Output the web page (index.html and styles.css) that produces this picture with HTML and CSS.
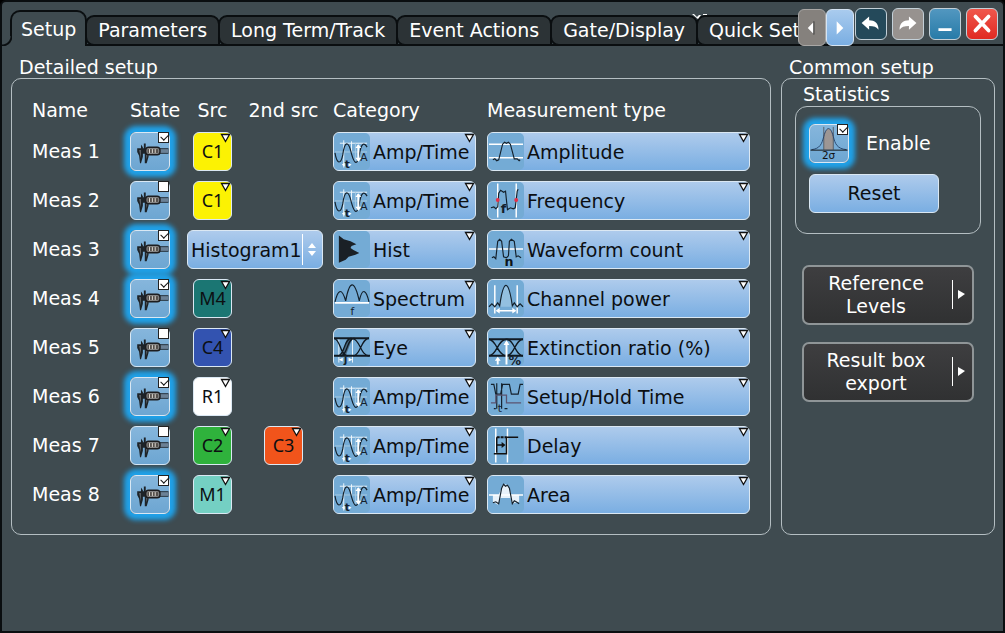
FILE: index.html
```html
<!DOCTYPE html>
<html lang="en">
<head>
<meta charset="utf-8">
<title>Measurement setup</title>
<link rel="stylesheet" href="styles.css">
</head>
<body>
<svg class="sprite" aria-hidden="true">
  <symbol id="caliper" viewBox="0 0 39 39">
    <path d="M6 16h33v6H18v3l-2 7h-2V22h-2v3l-2 7H9L8 24 6 20z" fill="#1d2328"/>
    <path d="M8 18h2v9zM15 22h2l-1 6z" fill="#5a6066"/>
    <path d="M10 17v-5l2 3v2zM13 17v-6h2v6z" fill="#1d2328"/>
    <path d="M29 17h10v4H29z" fill="#6b8196"/>
    <rect x="15" y="15" width="15" height="8" rx="3" fill="#858585" stroke="#1d1d1f" stroke-width="1.500"/>
    <rect x="17" y="17" width="11" height="4" fill="#55504c"/>
    <path d="M19 17v4M22 17v4M25 17v4" stroke="#e8e4dc"/>
  </symbol>
  <symbol id="sigma" viewBox="0 0 39 39">
    <path d="M14 26V10c3-8 7-8 10 0v16z" fill="#9d9694"/>
    <path d="M14 2v24M24 2v24" stroke="#555c66"/>
    <path d="M1 26c9-1 11-6 13-14 3-11 7-11 10 0 2 8 4 13 14 14" fill="none" stroke="#27456c"/>
    <path d="M0 26.500h39" stroke="#111"/>
    <text x="19" y="36" text-anchor="middle" font-size="11" fill="#111">2σ</text>
  </symbol>
  <symbol id="amp" viewBox="0 0 37 37">
    <path d="M10 7v28M18 8v12M6 10h28" stroke="#eef6fb"/>
    <path d="M1 19h33M22 10v18" stroke="#a8cbe3"/>
    <path d="M1 20c2 12 6 12 8 2 2-15 6-15 9-1 3 11 6 12 8 1 2-13 5-13 8-8" fill="none" stroke="#14212c" stroke-width="1.200"/>
    <path d="M25 12v16" stroke="#fff" stroke-width="2"/>
    <path d="M22 15l3-4 3 4zM22 25l3 4 3-4zM8 32l3-2v4zM18 32l-3-2v4z" fill="#fff"/>
    <text x="27" y="28" font-size="11" fill="#14212c">A</text>
    <text x="11" y="35" font-size="11" font-weight="bold" fill="#14212c">t</text>
  </symbol>
  <symbol id="hist" viewBox="0 0 37 37">
    <path d="M5 4l5 4 7 2 6 3-5 2-1 2 3 2 6 3-4 2-7 2-3 3-7 3z" fill="#1a2026"/>
  </symbol>
  <symbol id="spectrum" viewBox="0 0 37 37">
    <path d="M1 22C4 9 8 7 12 21 16-1 21-1 26 21 29 7 33 9 36 22" fill="none" stroke="#14212c" stroke-width="1.200"/>
    <path d="M1 23h35" stroke="#fff" stroke-width="2"/>
    <text x="17" y="35" font-size="11" fill="#14212c">f</text>
  </symbol>
  <symbol id="eye" viewBox="0 0 37 37">
    <path d="M7 27L14 9h5l-7 18z" fill="#4c6980"/>
    <path d="M5 9v25M19 9v25" stroke="#eef6fb"/>
    <path d="M0 9h36M0 27h37" stroke="#111a22" stroke-width="2"/>
    <path d="M0 9c7 1 6 18 14 18M4 27c7 0 6-18 14-18M7 27c7 0 6-18 14-18M19 9c8 1 8 18 17 18M20 27c7 0 8-18 16-18" fill="none" stroke="#111a22" stroke-width="1.300"/>
    <path d="M5 31l4-2v4zM19 31l-4-2v4z" fill="#fff"/>
    <text x="10" y="34" font-size="11" font-weight="bold" fill="#14212c">j</text>
  </symbol>
  <symbol id="amplitude" viewBox="0 0 37 37">
    <path d="M1 11h35M1 25h35" stroke="#fff" stroke-width="1.500"/>
    <path d="M5 27l2-1 2 2 2-1 4-16 2-2 2 1 2-1 2 2 4 15 3 0 2 2 1-1" fill="none" stroke="#14212c" stroke-width="1.200"/>
  </symbol>
  <symbol id="frequency" viewBox="0 0 37 37">
    <path d="M10 1v35M29 1v35" stroke="#fff" stroke-width="1.500"/>
    <path d="M3 26l3-1 2 2 2-2 1-14 2-3 3 2 2-1 2 19 3-2 3 1 2-1 2-17 1-2" fill="none" stroke="#14212c" stroke-width="1.200"/>
    <circle cx="10" cy="18" r="2" fill="#e5304a"/><circle cx="29" cy="18" r="2" fill="#e5304a"/>
    <text x="13" y="31" font-size="13" font-weight="bold" fill="#14212c">f</text>
  </symbol>
  <symbol id="count" viewBox="0 0 37 37">
    <path d="M1 18h35" stroke="#fff" stroke-width="1.500"/>
    <path d="M4 27l2-1 2 2 2-18 2-2 2 2 2 16 3 1 2-2 1-15 2-2 3 2 2 16 2-1 3 2" fill="none" stroke="#14212c" stroke-width="1.200"/>
    <text x="17" y="35" font-size="13" font-weight="bold" fill="#0c141b">n</text>
  </symbol>
  <symbol id="power" viewBox="0 0 37 37">
    <path d="M12 27C16-1 21-1 25 27z" fill="#93c0e0"/>
    <path d="M7 5v29M30 5v29M9 31h19" stroke="#fff" stroke-width="1.500"/>
    <path d="M8 31l4-3v6zM29 31l-4-3v6z" fill="#fff"/>
    <path d="M1 27l3-3 3 3 3-4 2 3C16-2 21-2 25 26l2-3 3 4 3-3 3 3" fill="none" stroke="#14212c" stroke-width="1.200"/>
  </symbol>
  <symbol id="extinction" viewBox="0 0 37 37">
    <path d="M1 10h35M1 27h35" stroke="#111a22" stroke-width="2"/>
    <path d="M1 10c8 1 9 17 18 17 8 0 9-17 17-17M1 27c8 0 9-17 18-17 8 0 9 17 17 17" fill="none" stroke="#111a22" stroke-width="1.400"/>
    <path d="M19 13v23M10 30v6" stroke="#fff" stroke-width="2"/>
    <path d="M16 16l3-5 3 5zM7 32l3-4 3 4z" fill="#fff"/>
    <text x="21" y="36" font-size="13" font-weight="bold" fill="#14212c">%</text>
  </symbol>
  <symbol id="setuphold" viewBox="0 0 37 37">
    <path d="M3 6h3l2 10h5l2-10h7l2 10h7l2-10h3M9 5v26M14 5v26M17 31h3M6 31h2" fill="none" stroke="#14212c" stroke-width="1.200"/>
    <path d="M3 25h5V17h11v8h15" fill="none" stroke="#5b5470" stroke-width="1.300"/>
    <text x="10" y="34" font-size="11" fill="#14212c">t</text>
  </symbol>
  <symbol id="delay" viewBox="0 0 37 37">
    <path d="M8 1v35M20 1v35" stroke="#fff" stroke-width="1.500"/>
    <path d="M9 10h10" stroke="#111" stroke-width="2" stroke-dasharray="3 1"/>
    <path d="M6 27h13V10h12M9 18h6M9 10v16" fill="none" stroke="#111" stroke-width="1.500"/>
    <path d="M14 15l4 3-4 3z" fill="#111"/>
  </symbol>
  <symbol id="area" viewBox="0 0 37 37">
    <path d="M5 19h6l4-10 3-1 3 2 3 9h8v7l-4 1-3 1-2-6-10 0-3 7-5-3z" fill="#e8f2fa"/>
    <path d="M1 19h35" stroke="#fff" stroke-width="1.500"/>
    <path d="M5 27l3-1 3 2 3-16 2-4 2 2 2-1 2 3 3 16 2-3 2 1 3 2" fill="none" stroke="#14212c" stroke-width="1.200"/>
  </symbol>
  <symbol id="drop" viewBox="0 0 11 10"><path d="M1.500 1.500h8L5.500 8.500z" fill="#fff" stroke="#111" stroke-width="1.300"/></symbol>
</svg>

<div class="dialog">
  <header class="bar">
    <div class="tabs" role="tablist">
      <button class="tab tab-active" role="tab" aria-selected="true">Setup</button>
      <button class="tab" role="tab">Parameters</button>
      <button class="tab" role="tab">Long Term/Track</button>
      <button class="tab" role="tab">Event Actions</button>
      <button class="tab" role="tab">Gate/Display</button>
      <button class="tab" role="tab">Quick Setup<svg class="glint" viewBox="0 0 16 5"><path d="M0 0h2l3 3 2-2h2L6 5zM11 0h4v1h-4z" fill="#fff"/></svg></button>
    </div>
    <div class="scrollers">
      <button class="scroller scroller-off" aria-label="Previous tabs"><svg viewBox="0 0 27 37"><path d="M9 19l6-6v12z" fill="#fff"/><path d="M15.500 12v14" stroke="#333"/></svg></button>
      <button class="scroller" aria-label="Next tabs"><svg viewBox="0 0 27 37"><path d="M17 19l-7-7v14z" fill="#fff"/></svg></button>
    </div>
    <div class="controls">
      <button class="control control-undo" aria-label="Undo"><svg viewBox="0 0 32 32"><path d="M6 15l8-7v4c6 0 10 3 10 10-2-3-5-4-10-4v4z" fill="#fff"/></svg></button>
      <button class="control control-redo" aria-label="Redo"><svg viewBox="0 0 32 32"><path d="M25 15l-8-7v4c-6 0-10 3-10 10 2-3 5-4 10-4v4z" fill="#fff"/></svg></button>
      <button class="control control-min" aria-label="Minimize"><svg viewBox="0 0 32 32"><path d="M9 22h14" stroke="#fff" stroke-width="3"/></svg></button>
      <button class="control control-close" aria-label="Close"><svg viewBox="0 0 32 32"><path d="M9 8l14 15M23 8L9 23" stroke="#fff" stroke-width="4" stroke-linecap="round"/></svg></button>
    </div>
  </header>

  <main class="content">
    <section class="group">
      <h2 class="group-title">Detailed setup</h2>
      <div class="panel">
        <table class="meas">
          <colgroup><col class="c-name"><col class="c-state"><col class="c-src"><col class="c-src2"><col class="c-cat"><col></colgroup>
          <thead>
            <tr><th class="name" scope="col">Name</th><th class="state" scope="col">State</th><th class="mid" scope="col">Src</th><th class="mid" scope="col">2nd src</th><th class="cat" scope="col">Category</th><th class="type" scope="col">Measurement type</th></tr>
          </thead>
          <tbody>
            <tr>
              <th class="name" scope="row">Meas 1</th>
              <td><label class="toggle"><svg class="toggle-art"><use href="#caliper"/></svg><input type="checkbox" class="tick" aria-label="Meas 1 state" checked></label></td>
              <td><div class="chip chip-yellow"><select aria-label="Meas 1 source"><option>C1</option></select><svg class="drop"><use href="#drop"/></svg></div></td>
              <td></td>
              <td class="cat"><div class="pick"><svg class="art"><use href="#amp"/></svg><select aria-label="Meas 1 category"><option>Amp/Time</option></select><svg class="drop"><use href="#drop"/></svg></div></td>
              <td class="type"><div class="pick"><svg class="art"><use href="#amplitude"/></svg><select aria-label="Meas 1 type"><option>Amplitude</option></select><svg class="drop"><use href="#drop"/></svg></div></td>
            </tr>
            <tr>
              <th class="name" scope="row">Meas 2</th>
              <td><label class="toggle"><svg class="toggle-art"><use href="#caliper"/></svg><input type="checkbox" class="tick" aria-label="Meas 2 state"></label></td>
              <td><div class="chip chip-yellow"><select aria-label="Meas 2 source"><option>C1</option></select><svg class="drop"><use href="#drop"/></svg></div></td>
              <td></td>
              <td class="cat"><div class="pick"><svg class="art"><use href="#amp"/></svg><select aria-label="Meas 2 category"><option>Amp/Time</option></select><svg class="drop"><use href="#drop"/></svg></div></td>
              <td class="type"><div class="pick"><svg class="art"><use href="#frequency"/></svg><select aria-label="Meas 2 type"><option>Frequency</option></select><svg class="drop"><use href="#drop"/></svg></div></td>
            </tr>
            <tr>
              <th class="name" scope="row">Meas 3</th>
              <td><label class="toggle"><svg class="toggle-art"><use href="#caliper"/></svg><input type="checkbox" class="tick" aria-label="Meas 3 state" checked></label></td>
              <td colspan="2"><div class="pick pick-source"><select aria-label="Meas 3 source"><option>Histogram1</option></select><svg class="spin" viewBox="0 0 20 37"><path d="M.5 3v31" stroke="#fff"/><path d="M6 17l4-5 4 5zM6 20l4 5 4-5z" fill="#fff"/></svg></div></td>
              <td class="cat"><div class="pick"><svg class="art"><use href="#hist"/></svg><select aria-label="Meas 3 category"><option>Hist</option></select><svg class="drop"><use href="#drop"/></svg></div></td>
              <td class="type"><div class="pick"><svg class="art"><use href="#count"/></svg><select aria-label="Meas 3 type"><option>Waveform count</option></select><svg class="drop"><use href="#drop"/></svg></div></td>
            </tr>
            <tr>
              <th class="name" scope="row">Meas 4</th>
              <td><label class="toggle"><svg class="toggle-art"><use href="#caliper"/></svg><input type="checkbox" class="tick" aria-label="Meas 4 state" checked></label></td>
              <td><div class="chip chip-teal"><select aria-label="Meas 4 source"><option>M4</option></select><svg class="drop"><use href="#drop"/></svg></div></td>
              <td></td>
              <td class="cat"><div class="pick"><svg class="art"><use href="#spectrum"/></svg><select aria-label="Meas 4 category"><option>Spectrum</option></select><svg class="drop"><use href="#drop"/></svg></div></td>
              <td class="type"><div class="pick"><svg class="art"><use href="#power"/></svg><select aria-label="Meas 4 type"><option>Channel power</option></select><svg class="drop"><use href="#drop"/></svg></div></td>
            </tr>
            <tr>
              <th class="name" scope="row">Meas 5</th>
              <td><label class="toggle"><svg class="toggle-art"><use href="#caliper"/></svg><input type="checkbox" class="tick" aria-label="Meas 5 state"></label></td>
              <td><div class="chip chip-blue"><select aria-label="Meas 5 source"><option>C4</option></select><svg class="drop"><use href="#drop"/></svg></div></td>
              <td></td>
              <td class="cat"><div class="pick"><svg class="art"><use href="#eye"/></svg><select aria-label="Meas 5 category"><option>Eye</option></select><svg class="drop"><use href="#drop"/></svg></div></td>
              <td class="type"><div class="pick"><svg class="art"><use href="#extinction"/></svg><select aria-label="Meas 5 type"><option>Extinction ratio (%)</option></select><svg class="drop"><use href="#drop"/></svg></div></td>
            </tr>
            <tr>
              <th class="name" scope="row">Meas 6</th>
              <td><label class="toggle"><svg class="toggle-art"><use href="#caliper"/></svg><input type="checkbox" class="tick" aria-label="Meas 6 state" checked></label></td>
              <td><div class="chip chip-white"><select aria-label="Meas 6 source"><option>R1</option></select><svg class="drop"><use href="#drop"/></svg></div></td>
              <td></td>
              <td class="cat"><div class="pick"><svg class="art"><use href="#amp"/></svg><select aria-label="Meas 6 category"><option>Amp/Time</option></select><svg class="drop"><use href="#drop"/></svg></div></td>
              <td class="type"><div class="pick"><svg class="art"><use href="#setuphold"/></svg><select aria-label="Meas 6 type"><option>Setup/Hold Time</option></select><svg class="drop"><use href="#drop"/></svg></div></td>
            </tr>
            <tr>
              <th class="name" scope="row">Meas 7</th>
              <td><label class="toggle"><svg class="toggle-art"><use href="#caliper"/></svg><input type="checkbox" class="tick" aria-label="Meas 7 state"></label></td>
              <td><div class="chip chip-green"><select aria-label="Meas 7 source"><option>C2</option></select><svg class="drop"><use href="#drop"/></svg></div></td>
              <td><div class="chip chip-orange"><select aria-label="Meas 7 second source"><option>C3</option></select><svg class="drop"><use href="#drop"/></svg></div></td>
              <td class="cat"><div class="pick"><svg class="art"><use href="#amp"/></svg><select aria-label="Meas 7 category"><option>Amp/Time</option></select><svg class="drop"><use href="#drop"/></svg></div></td>
              <td class="type"><div class="pick"><svg class="art"><use href="#delay"/></svg><select aria-label="Meas 7 type"><option>Delay</option></select><svg class="drop"><use href="#drop"/></svg></div></td>
            </tr>
            <tr>
              <th class="name" scope="row">Meas 8</th>
              <td><label class="toggle"><svg class="toggle-art"><use href="#caliper"/></svg><input type="checkbox" class="tick" aria-label="Meas 8 state" checked></label></td>
              <td><div class="chip chip-mint"><select aria-label="Meas 8 source"><option>M1</option></select><svg class="drop"><use href="#drop"/></svg></div></td>
              <td></td>
              <td class="cat"><div class="pick"><svg class="art"><use href="#amp"/></svg><select aria-label="Meas 8 category"><option>Amp/Time</option></select><svg class="drop"><use href="#drop"/></svg></div></td>
              <td class="type"><div class="pick"><svg class="art"><use href="#area"/></svg><select aria-label="Meas 8 type"><option>Area</option></select><svg class="drop"><use href="#drop"/></svg></div></td>
            </tr>
          </tbody>
        </table>
      </div>
    </section>

    <section class="group">
      <h2 class="group-title">Common setup</h2>
      <div class="panel panel-common">
        <h3 class="stats-title">Statistics</h3>
        <div class="stats">
          <div class="enable">
            <label class="toggle" for="enable"><svg class="toggle-art"><use href="#sigma"/></svg><input type="checkbox" class="tick" id="enable" checked></label>
            <label for="enable">Enable</label>
          </div>
          <button class="reset">Reset</button>
        </div>
        <div class="menus">
          <button class="menu"><span class="menu-text">Reference Levels</span><svg class="menu-mark" viewBox="0 0 20 30"><path d="M.5 0v29" stroke="#fff"/><path d="M6 10l7 4-7 5z" fill="#fff"/></svg></button>
          <button class="menu"><span class="menu-text">Result box export</span><svg class="menu-mark" viewBox="0 0 20 30"><path d="M.5 0v29" stroke="#fff"/><path d="M6 10l7 4-7 5z" fill="#fff"/></svg></button>
        </div>
      </div>
    </section>
  </main>
</div>
</body>
</html>
```
FILE: styles.css
```css
* { box-sizing: border-box; }
body {
  margin: 0;
  background: #000;
  color: #fff;
  font-family: "DejaVu Sans", Verdana, sans-serif;
  font-size: 19px;
  line-height: 23px;
}
button, select { font: inherit; color: inherit; margin: 0; padding: 0; }
svg { display: block; }
.sprite { display: none; }

.dialog {
  min-height: 100vh;
  border: 2px solid #0a0e10;
  border-radius: 6px 6px 0 0;
  background: #3f4b50;
}

/* tab bar */
.bar {
  display: flex;
  padding-right: 5px;
  background: linear-gradient(#0a0e10, #0a0e10) bottom / 100% 2px no-repeat;
}
.tabs {
  display: flex;
  flex: 1;
  min-width: 0;
  align-items: flex-end;
  height: 44px;
  padding-left: 8px;
  overflow: hidden;
}
.tab {
  flex: none;
  position: relative;
  height: 31px;
  margin-left: -2px;
  padding: 0 11px;
  border: 2px solid #0a0e10;
  border-radius: 9px 9px 0 9px;
  background: #2c3336;
  white-space: nowrap;
}
.tab-active {
  z-index: 1;
  height: 36px;
  margin-left: 0;
  padding: 0 9px;
  border-bottom: 0;
  border-radius: 10px 10px 0 0;
  background: #3f4b50;
}
.tab-active::before {
  content: "";
  position: absolute;
  left: -10px;
  bottom: 0;
  width: 10px;
  height: 10px;
  background: radial-gradient(circle at 0 0, #3f4b50 8px, #0a0e10 9px, #0a0e10 10px, #3f4b50 11px);
}
.glint { position: absolute; left: -6px; top: -3px; width: 16px; height: 5px; }
.scrollers { display: flex; padding-top: 7px; }
.scroller {
  width: 28px;
  height: 37px;
  border: 1px solid #d6e4f2;
  border-radius: 6px;
  background: linear-gradient(#a9cbee, #7aaee2);
}
.scroller-off { border-color: #a9a7a5; background: #85817d; }
.controls { display: flex; gap: 5px; padding: 6px 0 0 1px; }
.control {
  width: 32px;
  height: 32px;
  border: 1px solid #c3d0d8;
  border-radius: 6px;
}
.scroller svg, .control svg { width: 100%; height: 100%; }
.control-undo { background: #24495a; }
.control-redo { background: #97928f; }
.control-min { background: linear-gradient(#5297c0, #277ba8); }
.control-close { background: linear-gradient(#f0574c, #e02a22); }

/* groups */
.content {
  display: grid;
  grid-template-columns: 1fr 214px;
  gap: 10px;
  padding: 10px 8px 0 9px;
}
.group { display: flex; flex-direction: column; }
.group-title, .stats-title { margin: 0; padding-left: 8px; font-size: 19px; font-weight: normal; }
.group-title { height: 22px; }
.panel {
  flex: 1;
  padding: 14px 0 15px;
  border: 1px solid #b4bec2;
  border-radius: 10px;
}

/* measurement table */
.meas { width: 100%; table-layout: fixed; border-collapse: collapse; }
.meas th { font-weight: normal; text-align: left; }
.meas td, .meas th { height: 49px; padding: 0; vertical-align: middle; }
.meas thead th { height: 34px; white-space: nowrap; }
.meas .name { padding-left: 20px; }
.meas .state { padding-left: 7px; }
.meas .mid { text-align: center; }
.meas .cat { padding-left: 14px; }
.meas .type { padding: 0 20px 0 11px; }
.c-name { width: 111px; }
.c-state { width: 54px; }
.c-src { width: 71px; }
.c-src2 { width: 71px; }
.c-cat { width: 157px; }

.toggle {
  display: block;
  position: relative;
  width: 40px;
  height: 39px;
  border: 1px solid #d9e8f4;
  border-radius: 6px;
  background: linear-gradient(#86b6dc, #6da6d2);
}
.meas .toggle, .chip { margin: 0 auto; }
.toggle:has(:checked) { box-shadow: 0 0 5px 6px #1fa2ea; }
.toggle-art { width: 100%; height: 100%; }
.tick {
  appearance: none;
  position: absolute;
  top: -1px;
  right: 0;
  width: 11px;
  height: 11px;
  margin: 0;
  border: 1px solid #222;
  background: #fff;
}
.tick:checked::after {
  content: "";
  position: absolute;
  left: 2px;
  top: 1px;
  width: 6px;
  height: 4px;
  border: solid #111;
  border-width: 0 0 1px 1px;
  transform: rotate(-45deg);
}

.chip, .pick {
  position: relative;
  height: 39px;
  border: 1px solid #dbe8f3;
  border-radius: 6px;
  color: #0c0f12;
}
.chip { width: 39px; font-family: "Noto Sans", sans-serif; font-size: 18px; }
.chip select, .pick select {
  display: block;
  appearance: none;
  width: 100%;
  height: 100%;
  border: 0;
  background: none;
}
.chip select { text-align: center; text-align-last: center; }
.chip-yellow { background: #fcf203; }
.chip-teal { background: #1b7673; }
.chip-blue { background: #3353b0; }
.chip-white { background: #fff; }
.chip-green { background: #2fb23c; }
.chip-orange { background: #f1541b; }
.chip-mint { background: #74d0c3; }
.pick { background: linear-gradient(#aecbec, #7aaee2); }
.pick select { padding: 1px 0 0 39px; }
.pick-source { width: 136px; margin-left: 10px; }
.pick-source select { padding-left: 3px; }
.art {
  position: absolute;
  left: 0;
  top: 0;
  width: 36px;
  height: 37px;
  border-radius: 5px;
  background: #74abd5;
  pointer-events: none;
}
.drop { position: absolute; top: 0; right: 0; width: 11px; height: 10px; pointer-events: none; }
.spin { position: absolute; top: 0; right: 0; width: 20px; height: 37px; pointer-events: none; }

/* common setup */
.panel-common { padding: 4px 13px 0; }
.stats {
  display: flex;
  flex-direction: column;
  gap: 11px;
  padding: 17px 13px 20px;
  border: 1px solid #b4bec2;
  border-radius: 12px;
}
.enable { display: flex; align-items: center; gap: 17px; }
.reset {
  width: 130px;
  height: 39px;
  border: 1px solid #dbe8f3;
  border-radius: 6px;
  background: linear-gradient(#aecbec, #7aaee2);
  color: #0c0f12;
}
.menus { display: grid; gap: 17px; padding: 31px 7px 0; }
.menu {
  display: flex;
  align-items: center;
  height: 60px;
  border: 2px solid #8f9597;
  border-radius: 7px;
  background: linear-gradient(#3e3e40, #303132);
}
.menu-text { flex: 1; padding: 0 22px 0 18px; }
.menu-mark { width: 20px; height: 30px; }
```
